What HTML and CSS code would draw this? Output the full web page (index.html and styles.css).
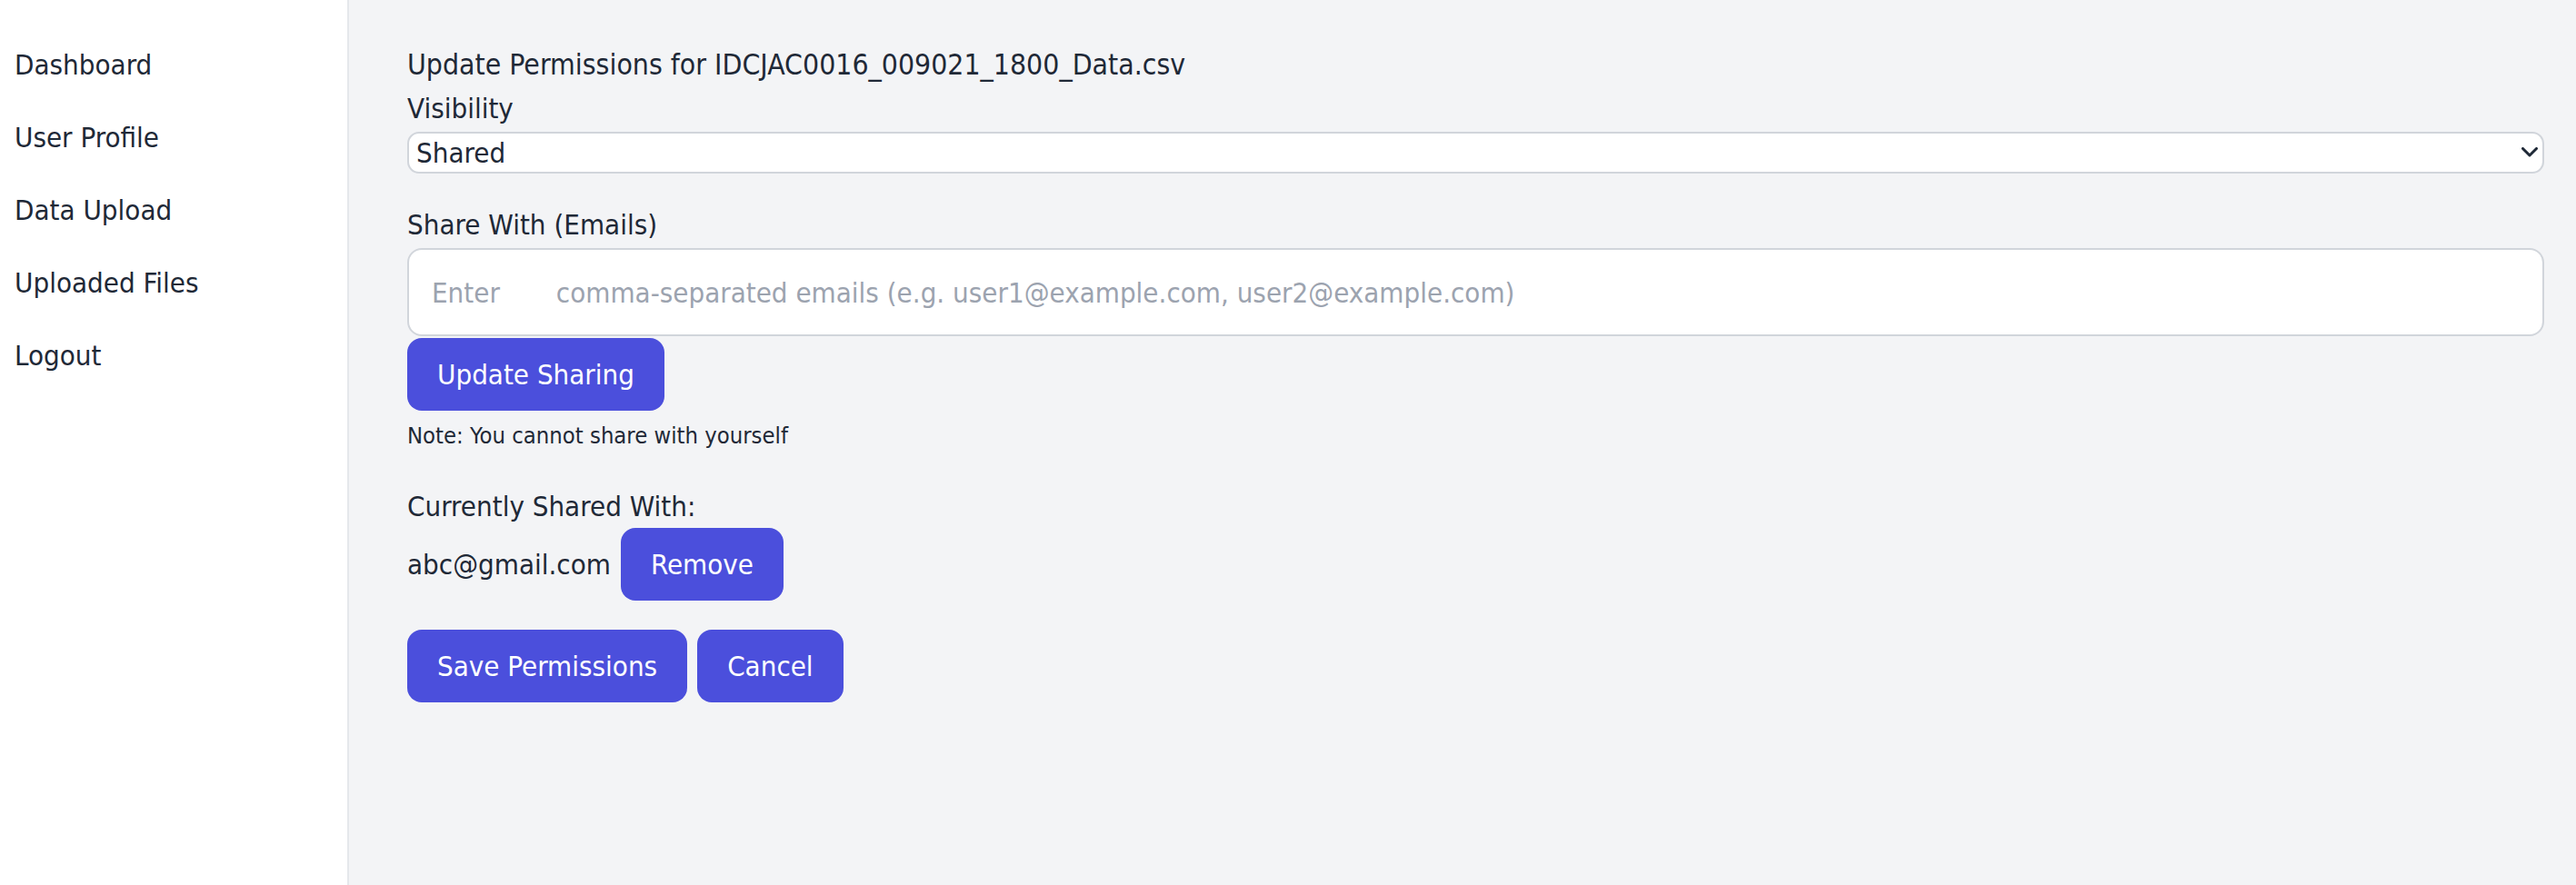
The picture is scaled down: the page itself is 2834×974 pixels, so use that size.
FILE: index.html
```html
<!DOCTYPE html>
<html lang="en">
<head>
<meta charset="utf-8">
<title>Update Permissions</title>
<link rel="stylesheet" href="styles.css">
</head>
<body>
<div class="app">
  <aside class="sidebar">
    <nav class="nav">
      <a class="nav-item" href="#">Dashboard</a>
      <a class="nav-item" href="#">User Profile</a>
      <a class="nav-item" href="#">Data Upload</a>
      <a class="nav-item" href="#">Uploaded Files</a>
      <a class="nav-item" href="#">Logout</a>
    </nav>
  </aside>
  <main class="main">
    <h2 class="title">Update Permissions for IDCJAC0016_009021_1800_Data.csv</h2>
    <label class="label" for="visibility">Visibility</label>
    <div class="select-wrap">
      <select id="visibility" class="select">
        <option>Shared</option>
        <option>Private</option>
        <option>Public</option>
      </select>
      <svg class="chevron" width="18" height="11" viewBox="0 0 18 11"><path d="M1.5 1.5 L9 9 L16.5 1.5" fill="none" stroke="#1f2937" stroke-width="3" stroke-linecap="round" stroke-linejoin="round"/></svg>
    </div>
    <label class="label label-gap" for="emails">Share With (Emails)</label>
    <input id="emails" class="input" type="text" placeholder="Enter&nbsp;&nbsp;&nbsp;&nbsp;&nbsp;&nbsp;&nbsp;comma-separated emails (e.g. user1@example.com, user2@example.com)">
    <div class="btn-row-top">
      <button class="btn" type="button">Update Sharing</button>
    </div>
    <p class="note">Note: You cannot share with yourself</p>
    <h3 class="subhead">Currently Shared With:</h3>
    <div class="shared-row">
      <span class="email">abc@gmail.com</span>
      <button class="btn" type="button">Remove</button>
    </div>
    <div class="actions">
      <button class="btn" type="button">Save Permissions</button>
      <button class="btn" type="button">Cancel</button>
    </div>
  </main>
</div>
</body>
</html>
```
FILE: styles.css
```css
html, body {
  margin: 0;
  padding: 0;
  height: 100%;
}
body {
  font-family: "DejaVu Sans", "Liberation Sans", sans-serif;
  font-stretch: condensed;
  font-size: 31px;
  line-height: 48px;
  color: #1f2937;
  background: #f3f4f6;
}
.app {
  display: flex;
  min-height: 974px;
}
.sidebar {
  width: 382px;
  flex: 0 0 382px;
  background: #ffffff;
  border-right: 2px solid #e5e7eb;
  padding-top: 31px;
}
.nav {
  display: flex;
  flex-direction: column;
}
.nav-item {
  display: block;
  padding: 16px 16px;
  color: #1f2937;
  text-decoration: none;
}
.main {
  flex: 1;
  background: #f3f4f6;
  padding: 47px 35px 0 64px;
}
.title {
  margin: 0;
  font-size: 31.7px;
  font-weight: normal;
  line-height: 48px;
}
.label {
  display: block;
  line-height: 48px;
}
.label-gap {
  margin-top: 32px;
}
.select-wrap {
  position: relative;
  margin-top: 2px;
}
.select {
  display: block;
  width: 100%;
  height: 46px;
  box-sizing: border-box;
  appearance: none;
  -webkit-appearance: none;
  background: #ffffff;
  border: 2px solid #d1d5db;
  border-radius: 13px;
  padding: 0 8px;
  font: inherit;
  font-stretch: condensed;
  color: #1f2937;
  line-height: 42px;
}
.chevron {
  position: absolute;
  right: 7px;
  top: 17px;
}
.input {
  display: block;
  width: 100%;
  height: 97px;
  box-sizing: border-box;
  margin-top: 2px;
  background: #ffffff;
  border: 2px solid #d1d5db;
  border-radius: 16px;
  padding: 0 25px;
  font: inherit;
  font-stretch: condensed;
  color: #1f2937;
  outline: none;
}
.input::placeholder {
  color: #9ca3af;
}
.btn-row-top {
  display: flex;
  margin-top: 2px;
}
.btn {
  height: 80px;
  box-sizing: border-box;
  padding: 0 33px;
  border: none;
  border-radius: 16px;
  background: #4b4fdc;
  color: #ffffff;
  font: inherit;
  font-stretch: condensed;
  cursor: pointer;
}
.note {
  margin: 7px 0 0;
  font-size: 25.4px;
  line-height: 40px;
}
.subhead {
  margin: 34px 0 0;
  font-size: 31px;
  font-weight: normal;
  line-height: 48px;
}
.shared-row {
  display: flex;
  align-items: center;
  gap: 11px;
}
.actions {
  display: flex;
  gap: 11px;
  margin-top: 32px;
}
```
